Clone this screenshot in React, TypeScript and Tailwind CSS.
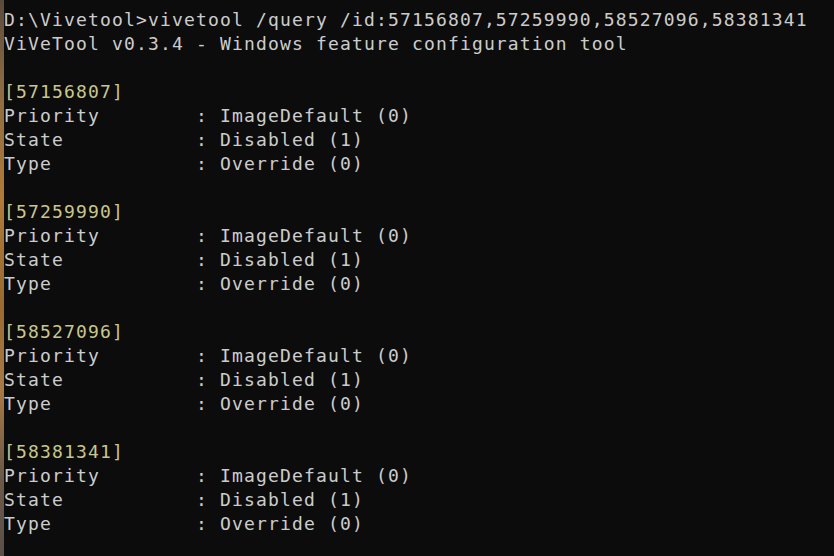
import React from "react";

const ids = ["57156807", "57259990", "58527096", "58381341"];

export default function App() {
  const mono = {
    fontFamily: '"DejaVu Sans Mono", "Liberation Mono", monospace',
  } as React.CSSProperties;
  return (
    <div className="flex h-[556px] w-[834px] overflow-hidden bg-[#0c0c0c]">
      <div className="w-[4px] shrink-0 bg-[linear-gradient(180deg,#5a4a3a_0%,#8a6a42_15%,#b07a38_35%,#9a6a30_55%,#a87a44_70%,#6e5a48_85%,#5a5048_100%)]" />
      <div
        className="flex flex-col pt-[8px] pl-[0px] text-[18px] leading-[24px] tracking-[1.16px] text-[#cccccc] whitespace-pre"
        style={mono}
      >
        <div className="h-6">D:\Vivetool&gt;vivetool /query /id:57156807,57259990,58527096,58381341</div>
        <div className="h-6">ViVeTool v0.3.4 - Windows feature configuration tool</div>
        <div className="h-6"> </div>
        {ids.map((id) => (
          <React.Fragment key={id}>
            <div className="h-6 text-[#c9c78e]">[{id}]</div>
            <div className="h-6">{"Priority        : ImageDefault (0)"}</div>
            <div className="h-6">{"State           : Disabled (1)"}</div>
            <div className="h-6">{"Type            : Override (0)"}</div>
            <div className="h-6"> </div>
          </React.Fragment>
        ))}
      </div>
    </div>
  );
}
